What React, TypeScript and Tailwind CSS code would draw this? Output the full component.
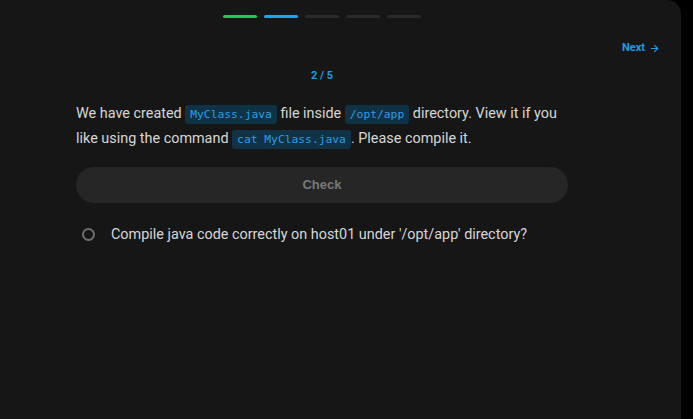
import React from 'react';

const Code: React.FC<{ children: React.ReactNode }> = ({ children }) => (
  <code className="rounded-[3px] bg-[#0f3247] px-[5px] py-[3px] font-['DejaVu_Sans_Mono',monospace] text-[11.3px] leading-none text-[#2f9de0]">
    {children}
  </code>
);

const steps = ['bg-[#22c55e]', 'bg-[#1fa3ec]', 'bg-[#2a2a2a]', 'bg-[#2a2a2a]', 'bg-[#2a2a2a]'];

export default function App() {
  return (
    <div className="flex h-[419px] w-[693px] bg-black font-['Roboto',sans-serif]">
      <div className="relative h-full w-[681px] rounded-tr-[14px] bg-[#161616]">
        <div className="ml-[76px] flex w-[492px] flex-col">
          <div className="flex justify-center gap-[7px] pt-[15px]">
            {steps.map((c, i) => (
              <div key={i} className={`h-[3px] w-[34px] rounded-full ${c}`} />
            ))}
          </div>
          <div className="mt-[50px] text-center text-[11px] font-bold text-[#1e9be5]">2 / 5</div>
          <p className="mt-[16px] text-[14.4px] leading-[25px] text-[#d6d6d6]">
            We have created <Code>MyClass.java</Code> file inside <Code>/opt/app</Code> directory. View it if you
            like using the command <Code>cat MyClass.java</Code>. Please compile it.
          </p>
          <button className="mt-[16px] h-[36px] w-full rounded-full bg-[#262626] font-['Liberation_Sans',sans-serif] text-[13px] font-bold text-[#7a7a7a]">
            Check
          </button>
          <div className="mt-[21px] flex items-center gap-[16px] pl-[6px]">
            <div className="h-[13px] w-[13px] rounded-full border-2 border-[#6f6f6f]" />
            <span className="text-[14.4px] text-[#d6d6d6]">
              Compile java code correctly on host01 under '/opt/app' directory?
            </span>
          </div>
        </div>
        <button className="absolute right-[21px] top-[40px] flex items-center gap-[4px] text-[11px] font-bold text-[#1e9be5]">
          Next
          <svg width="11" height="11" viewBox="0 0 24 24" fill="none" stroke="currentColor" strokeWidth="2.5" strokeLinecap="round" strokeLinejoin="round">
            <path d="M5 12h14" />
            <path d="m12 5 7 7-7 7" />
          </svg>
        </button>
      </div>
    </div>
  );
}
